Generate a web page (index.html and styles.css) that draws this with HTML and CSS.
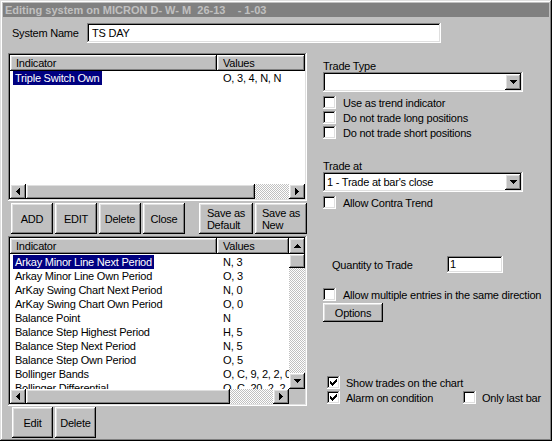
FILE: index.html
```html
<!DOCTYPE html>
<html>
<head>
<meta charset="utf-8">
<link rel="stylesheet" href="styles.css">
</head>
<body>
<div class="window">
  <div class="titlebar">Editing system on MICRON D- W- M  26-13    - 1-03</div>
  <div class="namerow">
    <span class="namelabel">System Name</span>
    <div class="field namefield">TS DAY</div>
  </div>
  <div class="main">
    <div class="leftcol">
      <div class="list list1">
        <div class="listbody">
          <div class="hdr"><div class="hc c1">Indicator</div><div class="hc c2">Values</div></div>
          <div class="rows">
            <div class="row sel"><span class="n"><span>Triple Switch Own</span></span><span class="v">O, 3, 4, N, N</span></div>
          </div>
        </div>
        <div class="hscroll">
          <div class="sbtn"><svg width="4" height="7" viewBox="0 0 4 7"><path d="M0 3h1v1H0zM1 2h1v3H1zM2 1h1v5H2zM3 0h1v7H3z"/></svg></div>
          <div class="thumb thumb1"></div>
          <div class="track"></div>
          <div class="sbtn"><svg width="4" height="7" viewBox="0 0 4 7"><path d="M0 0h1v7H0zM1 1h1v5H1zM2 2h1v3H2zM3 3h1v1H3z"/></svg></div>
        </div>
      </div>

      <div class="btnrow">
        <div class="btn b42">ADD</div>
        <div class="btn b42">EDIT</div>
        <div class="btn b42">Delete</div>
        <div class="btn b42">Close</div>
        <div class="btn bdef"><span class="two">Save as<br>Default</span></div>
        <div class="btn bnew"><span class="two">Save as<br>New</span></div>
      </div>

      <div class="list list2">
        <div class="listbody">
          <div class="hdr"><div class="hc c1">Indicator</div><div class="hc c2">Values</div></div>
          <div class="rows rows2">
            <div class="row sel"><span class="n"><span>Arkay Minor Line Next Period</span></span><span class="v">N, 3</span></div>
            <div class="row"><span class="n"><span>Arkay Minor Line Own Period</span></span><span class="v">O, 3</span></div>
            <div class="row"><span class="n"><span>ArKay Swing Chart Next Period</span></span><span class="v">N, 0</span></div>
            <div class="row"><span class="n"><span>ArKay Swing Chart Own Period</span></span><span class="v">O, 0</span></div>
            <div class="row"><span class="n"><span>Balance Point</span></span><span class="v">N</span></div>
            <div class="row"><span class="n"><span>Balance Step Highest Period</span></span><span class="v">H, 5</span></div>
            <div class="row"><span class="n"><span>Balance Step Next Period</span></span><span class="v">N, 5</span></div>
            <div class="row"><span class="n"><span>Balance Step Own Period</span></span><span class="v">O, 5</span></div>
            <div class="row"><span class="n"><span>Bollinger Bands</span></span><span class="v">O, C, 9, 2, 2, 0</span></div>
            <div class="row"><span class="n"><span>Bollinger Differential</span></span><span class="v">O, C, 20, 2, 2</span></div>
          </div>
        </div>
        <div class="vscroll">
          <div class="sbtn"><svg width="7" height="4" viewBox="0 0 7 4"><path d="M3 0h1v1H3zM2 1h3v1H2zM1 2h5v1H1zM0 3h7v1H0z"/></svg></div>
          <div class="thumb vthumb"></div>
          <div class="track"></div>
          <div class="sbtn"><svg width="7" height="4" viewBox="0 0 7 4"><path d="M0 0h7v1H0zM1 1h5v1H1zM2 2h3v1H2zM3 3h1v1H3z"/></svg></div>
        </div>
        <div class="hscroll">
          <div class="sbtn"><svg width="4" height="7" viewBox="0 0 4 7"><path d="M0 3h1v1H0zM1 2h1v3H1zM2 1h1v5H2zM3 0h1v7H3z"/></svg></div>
          <div class="thumb thumb2"></div>
          <div class="track"></div>
          <div class="sbtn"><svg width="4" height="7" viewBox="0 0 4 7"><path d="M0 0h1v7H0zM1 1h1v5H1zM2 2h1v3H2zM3 3h1v1H3z"/></svg></div>
        </div>
        <div class="corner"></div>
      </div>

      <div class="btnrow btnrow2">
        <div class="btn b41">Edit</div>
        <div class="btn b41">Delete</div>
      </div>
    </div>

    <div class="rightcol">
      <div class="lbl lbl-tt">Trade Type</div>
      <div class="field combo">
        <span class="ctext"></span>
        <div class="sbtn dd"><svg width="7" height="4" viewBox="0 0 7 4"><path d="M0 0h7v1H0zM1 1h5v1H1zM2 2h3v1H2zM3 3h1v1H3z"/></svg></div>
      </div>
      <div class="checks">
        <div class="chk"><span class="box"></span><span>Use as trend indicator</span></div>
        <div class="chk"><span class="box"></span><span>Do not trade long positions</span></div>
        <div class="chk"><span class="box"></span><span>Do not trade short positions</span></div>
      </div>

      <div class="lbl lbl-ta">Trade at</div>
      <div class="field combo">
        <span class="ctext">1 - Trade at bar's close</span>
        <div class="sbtn dd"><svg width="7" height="4" viewBox="0 0 7 4"><path d="M0 0h7v1H0zM1 1h5v1H1zM2 2h3v1H2zM3 3h1v1H3z"/></svg></div>
      </div>
      <div class="chk contra"><span class="box"></span><span>Allow Contra Trend</span></div>

      <div class="qty">
        <span class="qlabel">Quantity to Trade</span>
        <div class="field qfield">1</div>
      </div>

      <div class="chk multi"><span class="box"></span><span>Allow multiple entries in the same direction</span></div>
      <div class="btn options">Options</div>

      <div class="bottomchecks">
        <div class="chk"><span class="box"><svg width="9" height="9" viewBox="0 0 9 9"><path d="M7 1h1v1H7zM6 2h2v1H6zM1 3h1v1H1zM5 3h3v1H5zM1 4h2v1H1zM4 4h3v1H4zM1 5h5v1H1zM2 6h3v1H2zM3 7h1v1H3z"/></svg></span><span>Show trades on the chart</span></div>
        <div class="chkline">
          <div class="chk alarm"><span class="box"><svg width="9" height="9" viewBox="0 0 9 9"><path d="M7 1h1v1H7zM6 2h2v1H6zM1 3h1v1H1zM5 3h3v1H5zM1 4h2v1H1zM4 4h3v1H4zM1 5h5v1H1zM2 6h3v1H2zM3 7h1v1H3z"/></svg></span><span>Alarm on condition</span></div>
          <div class="chk"><span class="box"></span><span>Only last bar</span></div>
        </div>
      </div>
    </div>
  </div>
</div>
</body>
</html>
```

FILE: styles.css
```css
* { box-sizing: border-box; }
html, body { margin: 0; padding: 0; background: #c0c0c0; }
body {
  font-family: "Liberation Sans", Arial, sans-serif;
  font-size: 11px;
  letter-spacing: -0.22px;
  color: #000;
}
svg { display: block; }
svg path { fill: #000; }

.window {
  width: 552px;
  height: 441px;
  padding: 3px;
  background: #c0c0c0;
  box-shadow: inset -1px -1px #000, inset 1px 1px #dfdfdf, inset -2px -2px #808080, inset 2px 2px #fff;
  overflow: hidden;
}

.titlebar {
  height: 14px;
  line-height: 14px;
  background: #808080;
  color: #c0c0c0;
  font-weight: bold;
  letter-spacing: 0;
  padding-left: 2px;
  white-space: pre;
}

.field {
  background: #fff;
  box-shadow: inset -1px -1px #fff, inset 1px 1px #808080, inset -2px -2px #dfdfdf, inset 2px 2px #000;
}
.btn, .sbtn, .thumb, .hc {
  background: #c0c0c0;
  box-shadow: inset -1px -1px #000, inset 1px 1px #fff, inset -2px -2px #808080, inset 2px 2px #dfdfdf;
}

.namerow {
  display: flex;
  align-items: center;
  margin-top: 6px;
  height: 20px;
  padding-left: 9px;
}
.namelabel { width: 75px; }
.namefield {
  width: 354px;
  height: 20px;
  line-height: 20px;
  padding-left: 5px;
}

.main {
  display: flex;
  margin-top: 10px;
  padding-left: 5px;
}
.leftcol {
  width: 299px;
  display: flex;
  flex-direction: column;
}

.list {
  background: #fff;
  padding: 2px;
  box-shadow: inset -1px -1px #fff, inset 1px 1px #808080, inset -2px -2px #dfdfdf, inset 2px 2px #000;
}
.list1 {
  height: 148px;
  display: flex;
  flex-direction: column;
}
.list1 .listbody { flex: 1; overflow: hidden; }
.list2 {
  height: 170px;
  margin-top: 2px;
  display: grid;
  grid-template-columns: 279px 16px;
  grid-template-rows: 151px 15px;
}
.list2 .listbody { overflow: hidden; }

.hdr { display: flex; height: 16px; }
.hc { line-height: 16px; padding-left: 6px; white-space: nowrap; }
.hc.c1 { width: 207px; flex: none; }
.hc.c2 { flex: 1; }

.row {
  display: flex;
  height: 14px;
  line-height: 14px;
  white-space: nowrap;
}
.row .n { width: 207px; flex: none; padding-left: 3px; }
.row .n span { display: inline-block; padding: 0 2px; }
.row.sel .n span { background: #000080; color: #fff; }
.row .v { padding-left: 6px; }
.rows2 { padding-top: 1px; }

.hscroll { display: flex; height: 15px; }
.vscroll { display: flex; flex-direction: column; }
.sbtn {
  flex: none;
  width: 16px;
  display: flex;
  align-items: center;
  justify-content: center;
}
.vscroll .sbtn { height: 16px; }
.thumb { flex: none; }
.thumb1 { width: 229px; }
.thumb2 { width: 204px; }
.vthumb { height: 14px; }
.track {
  flex: 1;
  background: repeating-conic-gradient(#c0c0c0 0% 25%, #fff 0% 50%) 0 0 / 2px 2px;
}
.corner { background: #c0c0c0; }

.btn {
  display: flex;
  align-items: center;
  justify-content: center;
  flex: none;
}
.btnrow {
  display: flex;
  gap: 2px;
  height: 31px;
  margin-top: 2px;
  padding-left: 3px;
}
.btnrow .btn { height: 31px; }
.b42 { width: 42px; }
.b41 { width: 41px; }
.bdef { width: 54px; margin-left: 12px; }
.bnew { width: 52px; }
.two { text-align: left; line-height: 12px; }
.btnrow2 { margin-top: 1px; padding-left: 4px; }

.rightcol {
  margin-left: 16px;
  display: flex;
  flex-direction: column;
  width: 220px;
}
.lbl { height: 12px; line-height: 12px; }
.lbl-tt { margin-top: 7px; }
.lbl-ta { margin-top: 20px; }
.combo {
  width: 200px;
  height: 20px;
  padding: 2px;
  display: flex;
}
.ctext { flex: 1; line-height: 16px; padding-left: 2px; white-space: nowrap; }
.dd { height: 16px; }

.checks { margin-top: 3px; }
.chk {
  display: flex;
  align-items: center;
  height: 15px;
  white-space: nowrap;
}
.box {
  width: 13px;
  height: 13px;
  flex: none;
  margin-right: 7px;
  background: #fff;
  box-shadow: inset -1px -1px #fff, inset 1px 1px #808080, inset -2px -2px #dfdfdf, inset 2px 2px #000;
  display: flex;
  align-items: center;
  justify-content: center;
}
.contra { margin-top: 3px; }

.qty {
  display: flex;
  align-items: center;
  height: 17px;
  margin-top: 46px;
  padding-left: 9px;
}
.qlabel { width: 115px; flex: none; }
.qfield {
  width: 56px;
  height: 17px;
  line-height: 17px;
  padding-left: 3px;
}

.multi { margin-top: 14px; }
.options {
  width: 60px;
  height: 19px;
  margin-top: 1px;
}

.bottomchecks {
  margin-top: 53px;
  padding-left: 4px;
}
.bottomchecks .box { margin-right: 6px; }
.chkline { display: flex; }
.alarm { width: 136px; flex: none; }
```
